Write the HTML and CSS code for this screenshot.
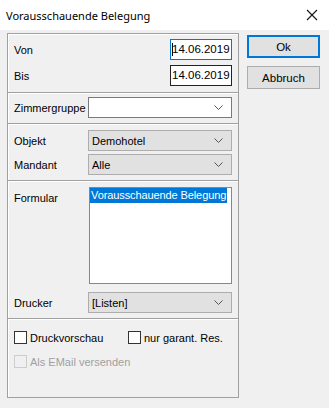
FILE: index.html
```html
<!DOCTYPE html>
<html lang="de">
<head>
  <meta charset="UTF-8" />
  <title>Vorausschauende Belegung</title>
  <link rel="stylesheet" href="styles.css">
</head>
<body>
  <div class="titlebar">
    <span class="title">Vorausschauende Belegung</span>
    <svg class="close" width="12" height="12" viewBox="0 0 12 12">
      <path d="M1 1 L11 11 M11 1 L1 11" stroke="#111" stroke-width="1.1" fill="none"/>
    </svg>
  </div>

  <div class="dialog">
    <div class="panel">
      <div class="section dates">
        <div class="row">
          <span class="label">Von</span>
          <div class="date focused"><span class="caret"></span>14.06.2019</div>
        </div>
        <div class="row">
          <span class="label">Bis</span>
          <div class="date">14.06.2019</div>
        </div>
      </div>

      <div class="section group">
        <div class="row">
          <span class="label">Zimmergruppe</span>
          <div class="combo white"><span></span>
            <svg class="arrow" width="9" height="5" viewBox="0 0 9 5"><path d="M0.5 0.5 L4.5 4.5 L8.5 0.5" stroke="#555" fill="none"/></svg>
          </div>
        </div>
      </div>

      <div class="section objects">
        <div class="row">
          <span class="label">Objekt</span>
          <div class="combo"><span>Demohotel</span>
            <svg class="arrow" width="9" height="5" viewBox="0 0 9 5"><path d="M0.5 0.5 L4.5 4.5 L8.5 0.5" stroke="#555" fill="none"/></svg>
          </div>
        </div>
        <div class="row">
          <span class="label">Mandant</span>
          <div class="combo"><span>Alle</span>
            <svg class="arrow" width="9" height="5" viewBox="0 0 9 5"><path d="M0.5 0.5 L4.5 4.5 L8.5 0.5" stroke="#555" fill="none"/></svg>
          </div>
        </div>
      </div>

      <div class="section forms">
        <div class="row top">
          <span class="label">Formular</span>
          <div class="listbox">
            <div class="item selected">Vorausschauende Belegung</div>
          </div>
        </div>
        <div class="row">
          <span class="label">Drucker</span>
          <div class="combo"><span>[Listen]</span>
            <svg class="arrow" width="9" height="5" viewBox="0 0 9 5"><path d="M0.5 0.5 L4.5 4.5 L8.5 0.5" stroke="#555" fill="none"/></svg>
          </div>
        </div>
      </div>

      <div class="section options">
        <div class="checks">
          <label class="check first"><span class="box"></span>Druckvorschau</label>
          <label class="check"><span class="box"></span>nur garant. Res.</label>
        </div>
        <label class="check disabled"><span class="box"></span>Als EMail versenden</label>
      </div>
    </div>

    <div class="buttons">
      <button class="btn default">Ok</button>
      <button class="btn">Abbruch</button>
    </div>
  </div>
</body>
</html>
```

FILE: styles.css
```css
body {
  margin: 0;
  width: 329px;
  height: 408px;
  background: #f0f0f0;
  font-family: 'Liberation Sans', Arial, sans-serif;
  font-size: 11px;
  color: #000;
  overflow: hidden;
}

.titlebar {
  height: 30px;
  background: #fff;
  display: flex;
  align-items: center;
  justify-content: space-between;
  padding: 0 11px 0 6px;
}

.title {
  font-family: 'Noto Sans', 'Liberation Sans', sans-serif;
  font-size: 11px;
}

.dialog {
  display: flex;
  align-items: flex-start;
  padding: 3px 0 0 7px;
  gap: 8px;
}

.panel {
  width: 230px;
  height: 363px;
  border: 1px solid #a0a0a0;
  box-shadow: inset 1px 1px #fff;
  display: flex;
  flex-direction: column;
}

.section {
  box-sizing: border-box;
  padding: 0 6px 0 6px;
  border-top: 1px solid #a0a0a0;
  box-shadow: inset 0 1px #fff;
}

.section:first-child {
  border-top: none;
  box-shadow: none;
}

.row {
  display: flex;
  align-items: center;
  justify-content: space-between;
}

.row.top {
  align-items: flex-start;
}

.row.top .label {
  padding-top: 5px;
}

.dates {
  padding-top: 5px;
  height: 58px;
  display: flex;
  flex-direction: column;
  gap: 5px;
}

.date {
  width: 59px;
  height: 19px;
  line-height: 19px;
  padding-left: 1px;
  background: #fff;
  border: 1px solid #222;
  position: relative;
  font-size: 11.5px;
}

.date.focused {
  border-color: #0078d7;
}

.caret {
  position: absolute;
  left: 1px;
  top: 3px;
  width: 1px;
  height: 13px;
  background: #000;
}

.group {
  height: 31px;
  padding-top: 4px;
}

.objects {
  height: 57px;
  padding-top: 6px;
  display: flex;
  flex-direction: column;
  gap: 3px;
}

.forms {
  height: 138px;
  padding-top: 6px;
  display: flex;
  flex-direction: column;
  gap: 8px;
}

.combo {
  flex-shrink: 0;
  width: 131px;
  height: 19px;
  border: 1px solid #adadad;
  background: #e1e1e1;
  display: flex;
  align-items: center;
  justify-content: space-between;
  padding: 0 8px 0 3px;
}

.combo.white {
  background: #fff;
  border-color: #7a7a7a;
}

.listbox {
  flex-shrink: 0;
  width: 141px;
  height: 95px;
  background: #fff;
  border: 1px solid #828790;
  overflow: hidden;
}

.item {
  display: inline-block;
  padding: 0 1px;
  height: 15px;
  line-height: 15px;
  white-space: nowrap;
  letter-spacing: -0.1px;
}

.item.selected {
  background: #0078d7;
  color: #fff;
}

.options {
  padding-top: 12px;
  display: flex;
  flex-direction: column;
  gap: 11px;
}

.checks {
  display: flex;
}

.check {
  display: flex;
  align-items: center;
  gap: 3px;
  white-space: nowrap;
}

.check.first {
  width: 114px;
}

.box {
  width: 11px;
  height: 11px;
  border: 1px solid #333;
  background: #fff;
}

.check.disabled {
  color: #a0a0a0;
}

.check.disabled .box {
  border-color: #ccc;
  background: #f0f0f0;
}

.buttons {
  display: flex;
  flex-direction: column;
  gap: 8px;
  padding-top: 2px;
}

.btn {
  width: 73px;
  height: 23px;
  background: #e1e1e1;
  border: 1px solid #adadad;
  font-family: 'Liberation Sans', Arial, sans-serif;
  font-size: 11.5px;
  color: #000;
  padding: 0;
}

.btn.default {
  border: 2px solid #0078d7;
}
```
